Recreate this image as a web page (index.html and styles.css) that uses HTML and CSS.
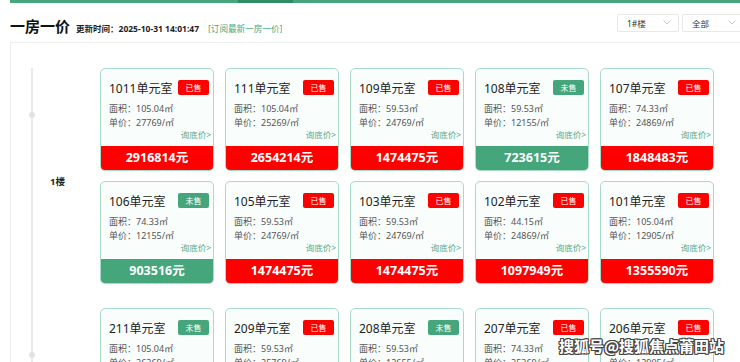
FILE: index.html
```html
<!DOCTYPE html>
<html lang="zh">
<head>
<meta charset="utf-8">
<title>一房一价</title>
<link rel="stylesheet" href="styles.css">
</head>
<body>
<div class="page">
  <div class="topbar"><div class="topbar-seg"></div></div>
  <div class="header">
    <div class="title-group">
      <span class="title">一房一价</span>
      <span class="update">更新时间：2025-10-31 14:01:47</span>
      <span class="subscribe">[订阅最新一房一价]</span>
    </div>
    <div class="selects">
      <div class="select"><span>1#楼</span><svg class="chev" width="8" height="5" viewBox="0 0 8 5"><polyline points="0.5,0.5 4,4 7.5,0.5" fill="none" stroke="#c4c4c4" stroke-width="0.9"/></svg></div>
      <div class="select"><span>全部</span><svg class="chev" width="8" height="5" viewBox="0 0 8 5"><polyline points="0.5,0.5 4,4 7.5,0.5" fill="none" stroke="#c4c4c4" stroke-width="0.9"/></svg></div>
    </div>
  </div>
  <div class="container">
    <div class="floor">
      <div class="side"><span class="floor-label">1楼</span></div>
      <div class="grid">
        <div class="card"><div class="card-body"><div class="card-head"><span class="room">1011单元室</span><span class="badge sold">已售</span></div><div class="info"><div>面积：105.04㎡</div><div>单价：27769/㎡</div></div><div class="ask">询底价&gt;</div></div><div class="price sold">2916814元</div></div>
        <div class="card"><div class="card-body"><div class="card-head"><span class="room">111单元室</span><span class="badge sold">已售</span></div><div class="info"><div>面积：105.04㎡</div><div>单价：25269/㎡</div></div><div class="ask">询底价&gt;</div></div><div class="price sold">2654214元</div></div>
        <div class="card"><div class="card-body"><div class="card-head"><span class="room">109单元室</span><span class="badge sold">已售</span></div><div class="info"><div>面积：59.53㎡</div><div>单价：24769/㎡</div></div><div class="ask">询底价&gt;</div></div><div class="price sold">1474475元</div></div>
        <div class="card"><div class="card-body"><div class="card-head"><span class="room">108单元室</span><span class="badge unsold">未售</span></div><div class="info"><div>面积：59.53㎡</div><div>单价：12155/㎡</div></div><div class="ask">询底价&gt;</div></div><div class="price unsold">723615元</div></div>
        <div class="card"><div class="card-body"><div class="card-head"><span class="room">107单元室</span><span class="badge sold">已售</span></div><div class="info"><div>面积：74.33㎡</div><div>单价：24869/㎡</div></div><div class="ask">询底价&gt;</div></div><div class="price sold">1848483元</div></div>

        <div class="card"><div class="card-body"><div class="card-head"><span class="room">106单元室</span><span class="badge unsold">未售</span></div><div class="info"><div>面积：74.33㎡</div><div>单价：12155/㎡</div></div><div class="ask">询底价&gt;</div></div><div class="price unsold">903516元</div></div>
        <div class="card"><div class="card-body"><div class="card-head"><span class="room">105单元室</span><span class="badge sold">已售</span></div><div class="info"><div>面积：59.53㎡</div><div>单价：24769/㎡</div></div><div class="ask">询底价&gt;</div></div><div class="price sold">1474475元</div></div>
        <div class="card"><div class="card-body"><div class="card-head"><span class="room">103单元室</span><span class="badge sold">已售</span></div><div class="info"><div>面积：59.53㎡</div><div>单价：24769/㎡</div></div><div class="ask">询底价&gt;</div></div><div class="price sold">1474475元</div></div>
        <div class="card"><div class="card-body"><div class="card-head"><span class="room">102单元室</span><span class="badge sold">已售</span></div><div class="info"><div>面积：44.15㎡</div><div>单价：24869/㎡</div></div><div class="ask">询底价&gt;</div></div><div class="price sold">1097949元</div></div>
        <div class="card"><div class="card-body"><div class="card-head"><span class="room">101单元室</span><span class="badge sold">已售</span></div><div class="info"><div>面积：105.04㎡</div><div>单价：12905/㎡</div></div><div class="ask">询底价&gt;</div></div><div class="price sold">1355590元</div></div>
      </div>
    </div>
    <div class="floor">
      <div class="side"><span class="floor-label">2楼</span></div>
      <div class="grid">
        <div class="card"><div class="card-body"><div class="card-head"><span class="room">211单元室</span><span class="badge unsold">未售</span></div><div class="info"><div>面积：105.04㎡</div><div>单价：26269/㎡</div></div><div class="ask">询底价&gt;</div></div><div class="price unsold">2759295元</div></div>
        <div class="card"><div class="card-body"><div class="card-head"><span class="room">209单元室</span><span class="badge sold">已售</span></div><div class="info"><div>面积：59.53㎡</div><div>单价：25769/㎡</div></div><div class="ask">询底价&gt;</div></div><div class="price sold">1534029元</div></div>
        <div class="card"><div class="card-body"><div class="card-head"><span class="room">208单元室</span><span class="badge unsold">未售</span></div><div class="info"><div>面积：59.53㎡</div><div>单价：12655/㎡</div></div><div class="ask">询底价&gt;</div></div><div class="price unsold">753352元</div></div>
        <div class="card"><div class="card-body"><div class="card-head"><span class="room">207单元室</span><span class="badge sold">已售</span></div><div class="info"><div>面积：74.33㎡</div><div>单价：25369/㎡</div></div><div class="ask">询底价&gt;</div></div><div class="price sold">1885678元</div></div>
        <div class="card"><div class="card-body"><div class="card-head"><span class="room">206单元室</span><span class="badge sold">已售</span></div><div class="info"><div>面积：105.04㎡</div><div>单价：12905/㎡</div></div><div class="ask">询底价&gt;</div></div><div class="price sold">1355541元</div></div>

        <div class="card"><div class="card-body"><div class="card-head"><span class="room">205单元室</span><span class="badge sold">已售</span></div><div class="info"><div>面积：74.33㎡</div><div>单价：25369/㎡</div></div><div class="ask">询底价&gt;</div></div><div class="price sold">1885678元</div></div>
        <div class="card"><div class="card-body"><div class="card-head"><span class="room">203单元室</span><span class="badge sold">已售</span></div><div class="info"><div>面积：59.53㎡</div><div>单价：25269/㎡</div></div><div class="ask">询底价&gt;</div></div><div class="price sold">1504264元</div></div>
        <div class="card"><div class="card-body"><div class="card-head"><span class="room">202单元室</span><span class="badge sold">已售</span></div><div class="info"><div>面积：44.15㎡</div><div>单价：25369/㎡</div></div><div class="ask">询底价&gt;</div></div><div class="price sold">1120042元</div></div>
        <div class="card"><div class="card-body"><div class="card-head"><span class="room">201单元室</span><span class="badge sold">已售</span></div><div class="info"><div>面积：105.04㎡</div><div>单价：13405/㎡</div></div><div class="ask">询底价&gt;</div></div><div class="price sold">1408061元</div></div>
        <div class="card"><div class="card-body"><div class="card-head"><span class="room">2011单元室</span><span class="badge sold">已售</span></div><div class="info"><div>面积：105.04㎡</div><div>单价：28269/㎡</div></div><div class="ask">询底价&gt;</div></div><div class="price sold">2969334元</div></div>
      </div>
    </div>
  </div>
  <div class="watermark">搜狐号@搜狐焦点莆田站</div>
</div>
</body>
</html>
```
FILE: styles.css
```css
html, body {
  margin: 0;
  padding: 0;
  background: #ffffff;
}
body {
  font-family: "Noto Sans", "Noto Sans CJK SC", sans-serif;
  color: #222;
  width: 740px;
  height: 362px;
  overflow: hidden;
}
.page {
  position: relative;
  width: 740px;
  height: 362px;
  overflow: hidden;
}
.topbar {
  margin-left: 10px;
  height: 3px;
  background: #47a67d;
  display: flex;
}
.topbar-seg {
  margin-left: 228px;
  width: 55px;
  background: #2f8b62;
}
.header {
  height: 39px;
  display: flex;
  align-items: center;
  padding-left: 10px;
}
.title-group {
  display: flex;
  align-items: baseline;
  margin-top: 5px;
}
.title {
  font-family: "Noto Sans CJK SC", sans-serif;
  font-size: 15px;
  font-weight: 700;
  color: #111;
}
.update {
  margin-left: 6px;
  font-size: 8.5px;
  font-weight: 700;
  color: #222;
}
.subscribe {
  margin-left: 9px;
  font-size: 8.6px;
  color: #4aa97f;
}
.selects {
  margin-left: auto;
  display: flex;
  gap: 3px;
  margin-right: -4px;
}
.select {
  width: 62px;
  height: 18px;
  box-sizing: border-box;
  border: 1px solid #e8e8e8;
  border-radius: 2px;
  display: flex;
  align-items: center;
  justify-content: space-between;
  padding: 0 7px 0 9px;
  font-size: 8.5px;
  color: #333;
}
.chev {
  display: block;
}
.container {
  margin-left: 10px;
  border-top: 1px solid #efefef;
  border-left: 1px solid #efefef;
  padding-top: 25px;
}
.floor {
  display: flex;
}
.side {
  width: 89px;
  flex: none;
  position: relative;
  display: flex;
  align-items: center;
  padding-bottom: 14px;
  box-sizing: border-box;
  background: linear-gradient(#e9e9e9, #e9e9e9) no-repeat 20px 0 / 2px 100%;
}
.side::before {
  content: "";
  position: absolute;
  left: 18px;
  top: 44px;
  width: 6px;
  height: 6px;
  border-radius: 50%;
  background: #e2e2e2;
}
.floor-label {
  padding-left: 39px;
  font-size: 9.5px;
  font-weight: 700;
  color: #222;
}
.grid {
  display: grid;
  grid-template-columns: repeat(5, 114px);
  column-gap: 11px;
  row-gap: 10px;
  padding-bottom: 24px;
}
.card {
  border: 1px solid #a7dbc6;
  border-radius: 5px;
  background: #f9fdfc;
  overflow: hidden;
  display: flex;
  flex-direction: column;
}
.card-body {
  padding: 11px 4px 0 8px;
}
.card-head {
  display: flex;
  justify-content: space-between;
  align-items: center;
  height: 15px;
}
.room {
  font-size: 12px;
  color: #222;
}
.badge {
  width: 31px;
  height: 15px;
  border-radius: 2px;
  color: #fff;
  font-size: 8px;
  line-height: 15px;
  text-align: center;
}
.badge.sold {
  background: #ff0000;
}
.badge.unsold {
  background: #45a67c;
}
.info {
  margin-top: 7px;
  font-size: 9px;
  line-height: 14px;
  color: #555;
}
.ask {
  text-align: right;
  margin-right: -2px;
  font-size: 8.5px;
  line-height: 10px;
  color: #5aa98a;
}
.price {
  margin-top: 6px;
  height: 24px;
  line-height: 24px;
  text-align: center;
  color: #fff;
  font-size: 12.5px;
  font-weight: 700;
}
.price.sold {
  background: #ff0000;
}
.price.unsold {
  background: #45a67c;
}
.watermark {
  position: absolute;
  left: 559px;
  top: 336px;
  font-family: "Noto Sans CJK SC", sans-serif;
  font-size: 15px;
  font-weight: 700;
  line-height: 20px;
  color: #ffffff;
  text-shadow: 1px 0 0 #444, -1px 0 0 #444, 0 1px 0 #444, 0 -1px 0 #444, 1px 1px 0 #444, -1px -1px 0 #444, 1px -1px 0 #444, -1px 1px 0 #444;
}
```
